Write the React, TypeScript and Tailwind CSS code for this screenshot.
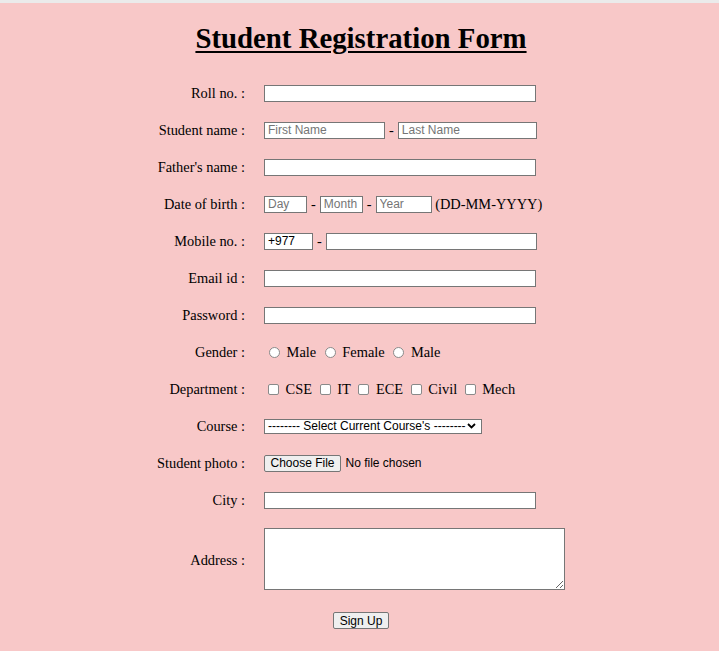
import React from "react";

const inp =
  "h-[17px] border border-[#767676] bg-white px-[3px] text-[12px] leading-none text-black font-['Liberation_Sans',Arial,sans-serif] placeholder:text-[#757575] outline-none";

function Label({ children, className = "" }: { children: React.ReactNode; className?: string }) {
  return <div className={"text-right text-[14.4px] leading-none " + className}>{children}</div>;
}

function Dash() {
  return <span className="mx-[4px] text-[14.4px] leading-none">-</span>;
}

function Radio() {
  return (
    <span className="ml-[5px] mr-[6.6px] inline-block h-[11px] w-[11px] shrink-0 rounded-full border border-[#8a8a8a] bg-white" />
  );
}

function Check({ first }: { first?: boolean }) {
  return (
    <span
      className={
        (first ? "ml-[4px]" : "ml-[7.6px]") +
        " mr-[6.6px] inline-block h-[11px] w-[11px] shrink-0 rounded-[2px] border border-[#8a8a8a] bg-white"
      }
    />
  );
}

export default function App() {
  return (
    <div className="min-h-screen bg-[#f8c8c8] text-black font-['Liberation_Serif','Times_New_Roman',serif]">
      <div className="h-[3px] bg-[#ebebeb]" />
      <h1 className="pt-[19px] pl-[3px] text-center text-[28.8px] font-bold leading-[33px] underline decoration-2 underline-offset-[3px]">
        Student Registration Form
      </h1>
      <div className="mt-[19.5px] grid grid-cols-[245px_auto] grid-rows-[repeat(12,37px)_80px] gap-x-[19px] items-center">
        <Label>Roll no. :</Label>
        <div className="flex items-center">
          <input className={inp + " w-[272px]"} />
        </div>

        <Label>Student name :</Label>
        <div className="flex items-center">
          <input className={inp + " w-[121px]"} placeholder="First Name" />
          <Dash />
          <input className={inp + " w-[139px]"} placeholder="Last Name" />
        </div>

        <Label>Father's name :</Label>
        <div className="flex items-center">
          <input className={inp + " w-[272px]"} />
        </div>

        <Label>Date of birth :</Label>
        <div className="flex items-center">
          <input className={inp + " w-[43px]"} placeholder="Day" />
          <Dash />
          <input className={inp + " w-[43px]"} placeholder="Month" />
          <Dash />
          <input className={inp + " w-[56px]"} placeholder="Year" />
          <span className="ml-[3.6px] text-[14.4px] leading-none">(DD-MM-YYYY)</span>
        </div>

        <Label>Mobile no. :</Label>
        <div className="flex items-center">
          <input className={inp + " w-[49px]"} defaultValue="+977" />
          <Dash />
          <input className={inp + " w-[211px]"} />
        </div>

        <Label>Email id :</Label>
        <div className="flex items-center">
          <input className={inp + " w-[272px]"} />
        </div>

        <Label>Password :</Label>
        <div className="flex items-center">
          <input type="password" className={inp + " w-[272px]"} />
        </div>

        <Label>Gender :</Label>
        <div className="flex items-center text-[14.4px] leading-none">
          <Radio />
          <span>Male</span>
          <span className="w-[3.6px]" />
          <Radio />
          <span>Female</span>
          <span className="w-[3.6px]" />
          <Radio />
          <span>Male</span>
        </div>

        <Label>Department :</Label>
        <div className="flex items-center text-[14.4px] leading-none">
          <Check first />
          <span>CSE</span>
          <Check />
          <span>IT</span>
          <Check />
          <span>ECE</span>
          <Check />
          <span>Civil</span>
          <Check />
          <span>Mech</span>
        </div>

        <Label>Course :</Label>
        <div className="flex items-center">
          <div className="flex h-[15px] w-[218px] items-center border border-[#767676] bg-white pl-[3px] text-[12px] leading-none font-['Liberation_Sans',Arial,sans-serif]">
            <span className="whitespace-pre">-------- Select Current Course's --------</span>
            <svg className="ml-auto mr-[5px]" width="9" height="6" viewBox="0 0 9 6">
              <path d="M1 1 L4.5 4.5 L8 1" fill="none" stroke="#000" strokeWidth="1.8" />
            </svg>
          </div>
        </div>

        <Label>Student photo :</Label>
        <div className="flex items-center font-['Liberation_Sans',Arial,sans-serif] text-[12px] leading-none">
          <button className="h-[17px] w-[77px] rounded-[2px] border border-[#767676] bg-[#efefef] text-[12px] leading-none">
            Choose File
          </button>
          <span className="ml-[4.5px]">No file chosen</span>
        </div>

        <Label>City :</Label>
        <div className="flex items-center">
          <input className={inp + " w-[272px]"} />
        </div>

        <Label className="pt-[4px]">Address :</Label>
        <div className="flex items-center">
          <textarea className="h-[62px] w-[301px] border border-[#767676] bg-white outline-none" />
        </div>
      </div>
      <div className="mt-[13.5px] flex justify-center pl-[3px]">
        <button className="h-[17px] w-[56px] rounded-[2px] border border-[#767676] bg-[#efefef] text-[12px] leading-none font-['Liberation_Sans',Arial,sans-serif]">
          Sign Up
        </button>
      </div>
    </div>
  );
}
